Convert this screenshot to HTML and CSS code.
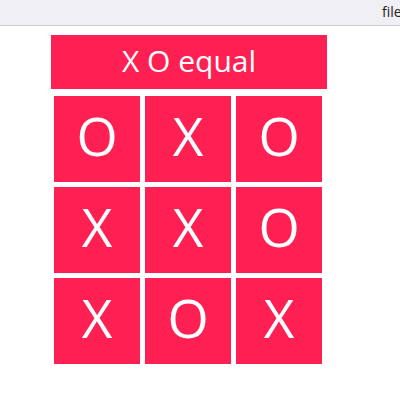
FILE: index.html
```html
<!DOCTYPE html>
<html>
<head>
<meta charset="utf-8">
<link rel="stylesheet" href="styles.css">
</head>
<body>
<div class="topbar"><span class="url">file:///C:/Users/tic-tac-toe/index.html</span></div>
<div class="game">
  <div class="status">X O equal</div>
  <div class="board">
    <div class="cell">O</div>
    <div class="cell">X</div>
    <div class="cell">O</div>
    <div class="cell">X</div>
    <div class="cell">X</div>
    <div class="cell">O</div>
    <div class="cell">X</div>
    <div class="cell">O</div>
    <div class="cell">X</div>
  </div>
</div>
</body>
</html>
```
FILE: styles.css
```css
html, body {
  margin: 0;
  padding: 0;
  background: #ffffff;
  font-family: "Open Sans", "Noto Sans", sans-serif;
}
.topbar {
  height: 25px;
  background: #f0f0f4;
  border-bottom: 1px solid #cfcfd3;
  overflow: hidden;
  white-space: nowrap;
  padding-left: 382px;
}
.url {
  font-size: 14px;
  line-height: 22px;
  color: #222;
}
.game {
  margin: 9px 0 0 51px;
  width: 276px;
}
.status {
  height: 54px;
  background: #fe2052;
  color: #fff;
  font-size: 30px;
  line-height: 52px;
  text-align: center;
}
.board {
  margin: 7px 0 0 3px;
  display: grid;
  grid-template-columns: repeat(3, 86px);
  grid-auto-rows: 86px;
  gap: 5px;
}
.cell {
  background: #fe2052;
  color: #fff;
  font-size: 53px;
  display: flex;
  align-items: center;
  justify-content: center;
  padding-bottom: 8px;
  box-sizing: border-box;
}
```
